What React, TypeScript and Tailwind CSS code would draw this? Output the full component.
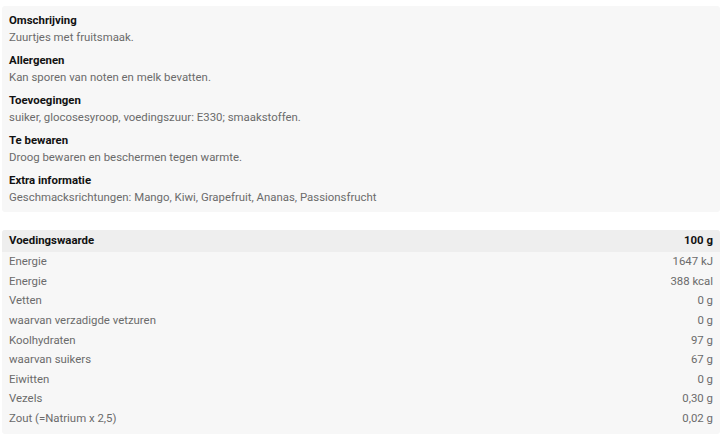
const info = [
  { title: "Omschrijving", text: "Zuurtjes met fruitsmaak." },
  { title: "Allergenen", text: "Kan sporen van noten en melk bevatten." },
  { title: "Toevoegingen", text: "suiker, glocosesyroop, voedingszuur: E330; smaakstoffen." },
  { title: "Te bewaren", text: "Droog bewaren en beschermen tegen warmte." },
  { title: "Extra informatie", text: "Geschmacksrichtungen: Mango, Kiwi, Grapefruit, Ananas, Passionsfrucht" },
];

const rows = [
  ["Energie", "1647 kJ"],
  ["Energie", "388 kcal"],
  ["Vetten", "0 g"],
  ["waarvan verzadigde vetzuren", "0 g"],
  ["Koolhydraten", "97 g"],
  ["waarvan suikers", "67 g"],
  ["Eiwitten", "0 g"],
  ["Vezels", "0,30 g"],
  ["Zout (=Natrium x 2,5)", "0,02 g"],
];

export default function App() {
  return (
    <div className="bg-white w-[727px] h-[438px] pt-[6px] pl-[2px] pr-[7px] font-['Roboto',sans-serif] text-[11.4px]">
      <div className="bg-[#f7f7f7] rounded-[3px] px-[7px] pt-[6px] flex flex-col">
        {info.map((item) => (
          <div key={item.title} className="h-[40px] flex flex-col">
            <div className="font-bold text-[#111] leading-[16px]">{item.title}</div>
            <div className="text-[#6b6b6b] leading-[18px]">{item.text}</div>
          </div>
        ))}
      </div>
      <div className="mt-[18px] bg-[#f7f7f7] rounded-[3px] pb-[6px]">
        <div className="bg-[#eeeeee] rounded-t-[3px] h-[22px] px-[7px] flex items-center justify-between font-bold text-[#111]">
          <span>Voedingswaarde</span>
          <span>100 g</span>
        </div>
        {rows.map(([name, value], i) => (
          <div key={i} className="h-[19.6px] px-[7px] flex items-center justify-between text-[#6b6b6b]">
            <span>{name}</span>
            <span>{value}</span>
          </div>
        ))}
      </div>
    </div>
  );
}
